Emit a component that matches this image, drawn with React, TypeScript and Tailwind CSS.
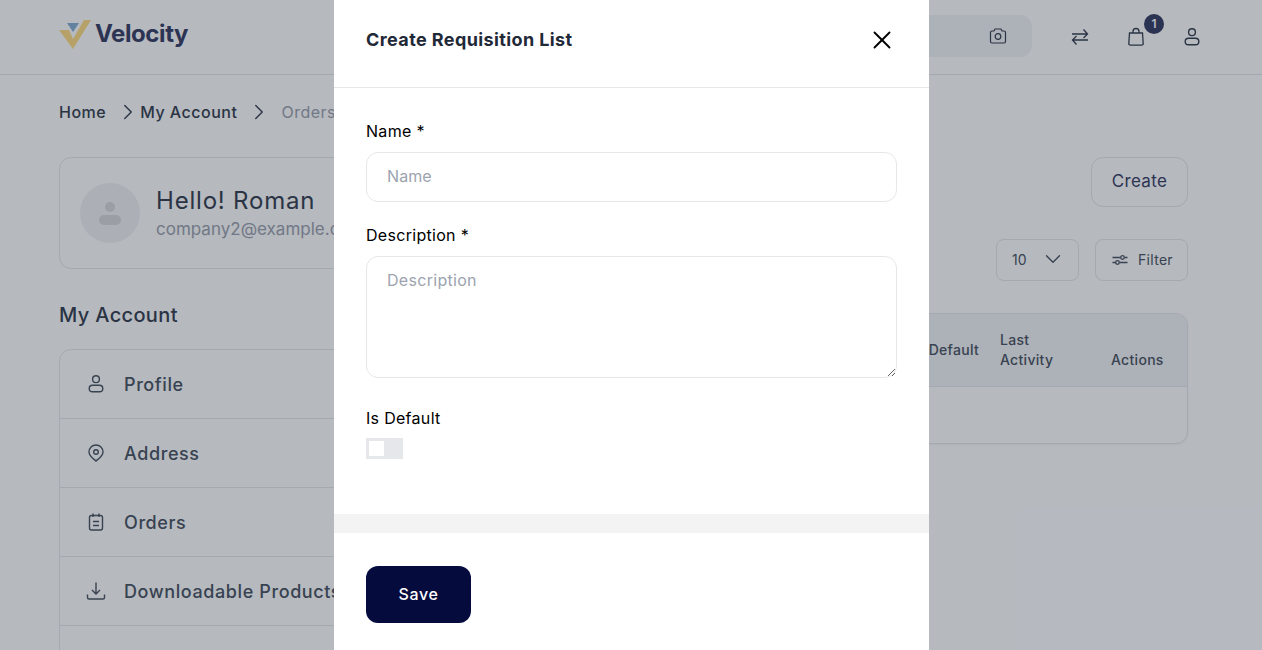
import React from 'react';
import { X, ChevronRight, ChevronDown } from 'lucide-react';

const UserIcon = ({ className }: { className?: string }) => (
  <svg viewBox="0 0 20 20" fill="none" stroke="currentColor" strokeWidth="1.4" className={className}>
    <circle cx="10" cy="5.2" r="3.4" />
    <rect x="3.2" y="11.2" width="13.6" height="6.6" rx="3.3" />
  </svg>
);

const menuItems = [
  {
    label: 'Profile',
    icon: <UserIcon className="w-5 h-5" />,
  },
  {
    label: 'Address',
    icon: (
      <svg viewBox="0 0 20 20" fill="none" stroke="currentColor" strokeWidth="1.4" className="w-5 h-5">
        <path d="M10 18c-1-1-7-4.500-7-9a7 7 0 0 1 14 0c0 4.500-6 8-7 9z" />
        <circle cx="10" cy="9" r="2.300" />
      </svg>
    ),
  },
  {
    label: 'Orders',
    icon: (
      <svg viewBox="0 0 20 20" fill="none" stroke="currentColor" strokeWidth="1.4" className="w-5 h-5">
        <rect x="3.500" y="3.500" width="13" height="14.500" rx="2" />
        <path d="M7 1.500v3.500M13 1.500v3.500M7 9.500h6M7 13.500h6" />
      </svg>
    ),
  },
  {
    label: 'Downloadable Products',
    icon: (
      <svg viewBox="0 0 20 20" fill="none" stroke="currentColor" strokeWidth="1.4" className="w-5 h-5">
        <path d="M10 1.500v11M6 9l4 4 4-4M1.500 13.500v3a1.500 1.500 0 0 0 1.500 1.500h14a1.500 1.500 0 0 0 1.500-1.500v-3" />
      </svg>
    ),
  },
  { label: '', icon: null },
];

export default function App() {
  return (
    <div className="relative h-[650px] overflow-hidden bg-white font-['Inter',sans-serif] tracking-[0.3px] text-[#374151]">
      {/* Header */}
      <header className="h-[75px] border-b border-[#e5e7eb] pl-[59px] pr-[60px] flex items-center justify-between">
        <div className="flex items-center gap-[4px] -mt-[6px]">
          <svg viewBox="0 0 32 29" className="w-[32px] h-[29px]">
            <polygon points="0,10 10,10 14,19 25,0 32,0 14,29" fill="#ffdf85" />
            <polygon points="8,3 20,3 14,12" fill="#89b0d6" />
          </svg>
          <span className="text-[24px] font-bold text-[#3a4168] tracking-[-0.4px]">Velocity</span>
        </div>
        <div className="flex items-center">
          <div className="w-[300px] h-[42px] rounded-xl bg-[#f3f4f6] flex items-center justify-end pr-[24px] mr-[38px] -mt-[2px] text-[#374151]">
            <svg viewBox="0 0 20 20" fill="none" stroke="currentColor" strokeWidth="1.2" className="w-[20px] h-[20px]">
              <path d="M2.500 6.500a1.500 1.500 0 0 1 1.500-1.500h2l1-2h6l1 2h2a1.500 1.500 0 0 1 1.500 1.500v9a1.500 1.500 0 0 1-1.500 1.500h-12a1.500 1.500 0 0 1-1.500-1.500z" />
              <circle cx="10" cy="10.500" r="2.800" />
            </svg>
          </div>
          <svg viewBox="0 0 20 20" fill="none" stroke="currentColor" strokeWidth="1.3" className="w-5 h-5 text-[#374151]">
            <path d="M2 7h15.500M13.500 2.500l4 4.500-4 4M18 13H2.500M6.500 9l-4 4 4 4.500" />
          </svg>
          <div className="relative ml-[36px] text-[#374151]">
            <svg viewBox="0 0 20 20" fill="none" stroke="currentColor" strokeWidth="1.3" className="w-5 h-5">
              <path d="M3.500 6h13l.7 10.500a1.500 1.500 0 0 1-1.500 1.700H4.300a1.500 1.500 0 0 1-1.500-1.700zM7 6V4.500a3 3 0 0 1 6 0V6" />
            </svg>
            <span className="absolute -top-[13px] left-[8px] ml-[10px] w-[20px] h-[20px] rounded-full bg-[#383f66] text-white text-[12px] font-semibold tracking-normal flex items-center justify-center">1</span>
          </div>
          <UserIcon className="w-5 h-5 ml-[36px] text-[#374151]" />
        </div>
      </header>

      {/* Page */}
      <main className="pl-[59px] pr-[74px]">
        <nav className="h-[76px] pb-[2px] flex items-center text-[16px] font-medium tracking-[0.5px] text-[#374151]">
          <span>Home</span>
          <ChevronRight className="w-[26px] h-[26px] ml-[9px] -mr-[1px] stroke-[1.300]" />
          <span>My Account</span>
          <ChevronRight className="w-[26px] h-[26px] ml-[9px] mr-[9px] stroke-[1.300]" />
          <span className="text-[#9ca3af] font-normal">Orders</span>
        </nav>

        <div className="flex gap-[20px] pt-[6px]">
          <aside className="w-[330px] shrink-0">
            <div className="h-[112px] border border-[#e5e7eb] rounded-xl pl-[20px] flex items-center gap-[16px]">
              <div className="w-[60px] h-[60px] rounded-full bg-[#f1f1f2] flex items-center justify-center">
                <svg viewBox="0 0 24 24" fill="#d8d8da" className="w-[24px] h-[24px]">
                  <circle cx="12" cy="6" r="5" />
                  <rect x="1" y="14" width="22" height="10" rx="5" />
                </svg>
              </div>
              <div className="-mt-[1px]">
                <p className="text-[24px] leading-[32px] tracking-[0.8px] text-[#374151]">Hello! Roman</p>
                <p className="text-[17px] leading-[24px] tracking-normal text-[#9ca3af]">company2@example.com</p>
              </div>
            </div>
            <h2 className="mt-[32px] text-[20px] leading-[28px] font-medium tracking-[0.35px]">My Account</h2>
            <div className="mt-[20px] border border-[#e5e7eb] rounded-t-xl">
              {menuItems.map((item) => (
                <div key={item.label} className="h-[69px] border-b border-[#e5e7eb] pl-[26px] flex items-center gap-[18px] text-[18px] font-medium tracking-[0.6px] text-[#4b5563] whitespace-nowrap">
                  <span className="w-5 h-5">{item.icon}</span>
                  <span>{item.label}</span>
                </div>
              ))}
            </div>
          </aside>

          <section className="flex-1">
            <div className="flex justify-end">
              <button className="w-[97px] h-[50px] pb-[1px] border border-[#e5e7eb] rounded-xl text-[17px] text-[#3a4168]">Create</button>
            </div>
            <div className="flex justify-end gap-[16px] mt-[32px]">
              <div className="w-[83px] h-[42px] pb-[2px] border border-[#e5e7eb] rounded-lg pl-[15px] pr-[12px] flex items-center justify-between text-[14px] tracking-normal text-[#4b5563]">
                10 <ChevronDown className="w-[26px] h-[26px] stroke-[1.300]" />
              </div>
              <div className="w-[93px] h-[42px] pb-[1px] border border-[#e5e7eb] rounded-lg pl-[16px] flex items-center gap-[10px] text-[14px] text-[#4b5563]">
                <svg viewBox="0 0 16 16" fill="none" stroke="currentColor" strokeWidth="1.300" className="w-[16px] h-[16px]">
                  <path d="M0.500 5.500h8M12.500 5.500h3M0.500 10.500h3M7.500 10.500h8" />
                  <circle cx="10.500" cy="5.500" r="1.800" />
                  <circle cx="5.500" cy="10.500" r="1.800" />
                </svg>
                Filter
              </div>
            </div>
            <div className="mt-[32px] border border-[#e5e7eb] rounded-xl shadow-xs overflow-hidden">
              <div className="h-[73px] bg-[#f3f4f6] border-b border-[#e5e7eb] flex items-center justify-end text-[14px] leading-[20px] font-medium text-[#4b5563]">
                <span className="mr-[21px]">Default</span>
                <span className="w-[111px] font-medium">Last<br />Activity</span>
                <span className="w-[76px] pt-[20px]">Actions</span>
              </div>
              <div className="h-[56px]" />
            </div>
          </section>
        </div>
      </main>

      {/* Dim layer and dialog */}
      <div className="absolute inset-0 pl-[1px] bg-[#0d1629]/30 flex justify-center">
        <div className="w-[595px] h-full bg-white">
          <div className="h-[88px] border-b border-[#e5e7eb] pl-[32px] pr-[32px] pb-[8px] flex items-center justify-between">
            <h1 className="text-[18px] font-bold tracking-[0.4px] text-[#1f2937]">Create Requisition List</h1>
            <X className="w-[30px] h-[30px] text-black stroke-[1.500]" />
          </div>
          <form className="px-[32px] pt-[31px]">
            <label className="block text-[16px] leading-[24px] text-black">Name *</label>
            <input placeholder="Name" className="mt-[9px] block w-full h-[50px] pb-[2px] border border-[#e5e7eb] rounded-xl px-[20px] text-[16px] tracking-[0.1px] placeholder:text-[#9ca3af] outline-none" />
            <label className="block mt-[21px] text-[16px] leading-[24px] text-black">Description *</label>
            <textarea placeholder="Description" className="mt-[9px] block w-full h-[122px] border border-[#e5e7eb] rounded-xl px-[20px] pt-[11px] pb-[12px] text-[16px] tracking-[0.3px] placeholder:text-[#9ca3af] outline-none" />
            <label className="block mt-[28px] text-[16px] leading-[24px] text-black">Is Default</label>
            <div className="mt-[8px] w-[37px] h-[21px] bg-[#e5e7eb] flex items-center pl-[3px]">
              <div className="w-[15px] h-[15px] bg-white" />
            </div>
          </form>
          <div className="mt-[55px] h-[19px] bg-[#f3f3f3]" />
          <div className="px-[32px] pt-[33px]">
            <button className="w-[105px] h-[57px] pb-[2px] rounded-xl bg-[#060b3d] text-white text-[16px] font-medium tracking-[0.6px]">Save</button>
          </div>
        </div>
      </div>
    </div>
  );
}
